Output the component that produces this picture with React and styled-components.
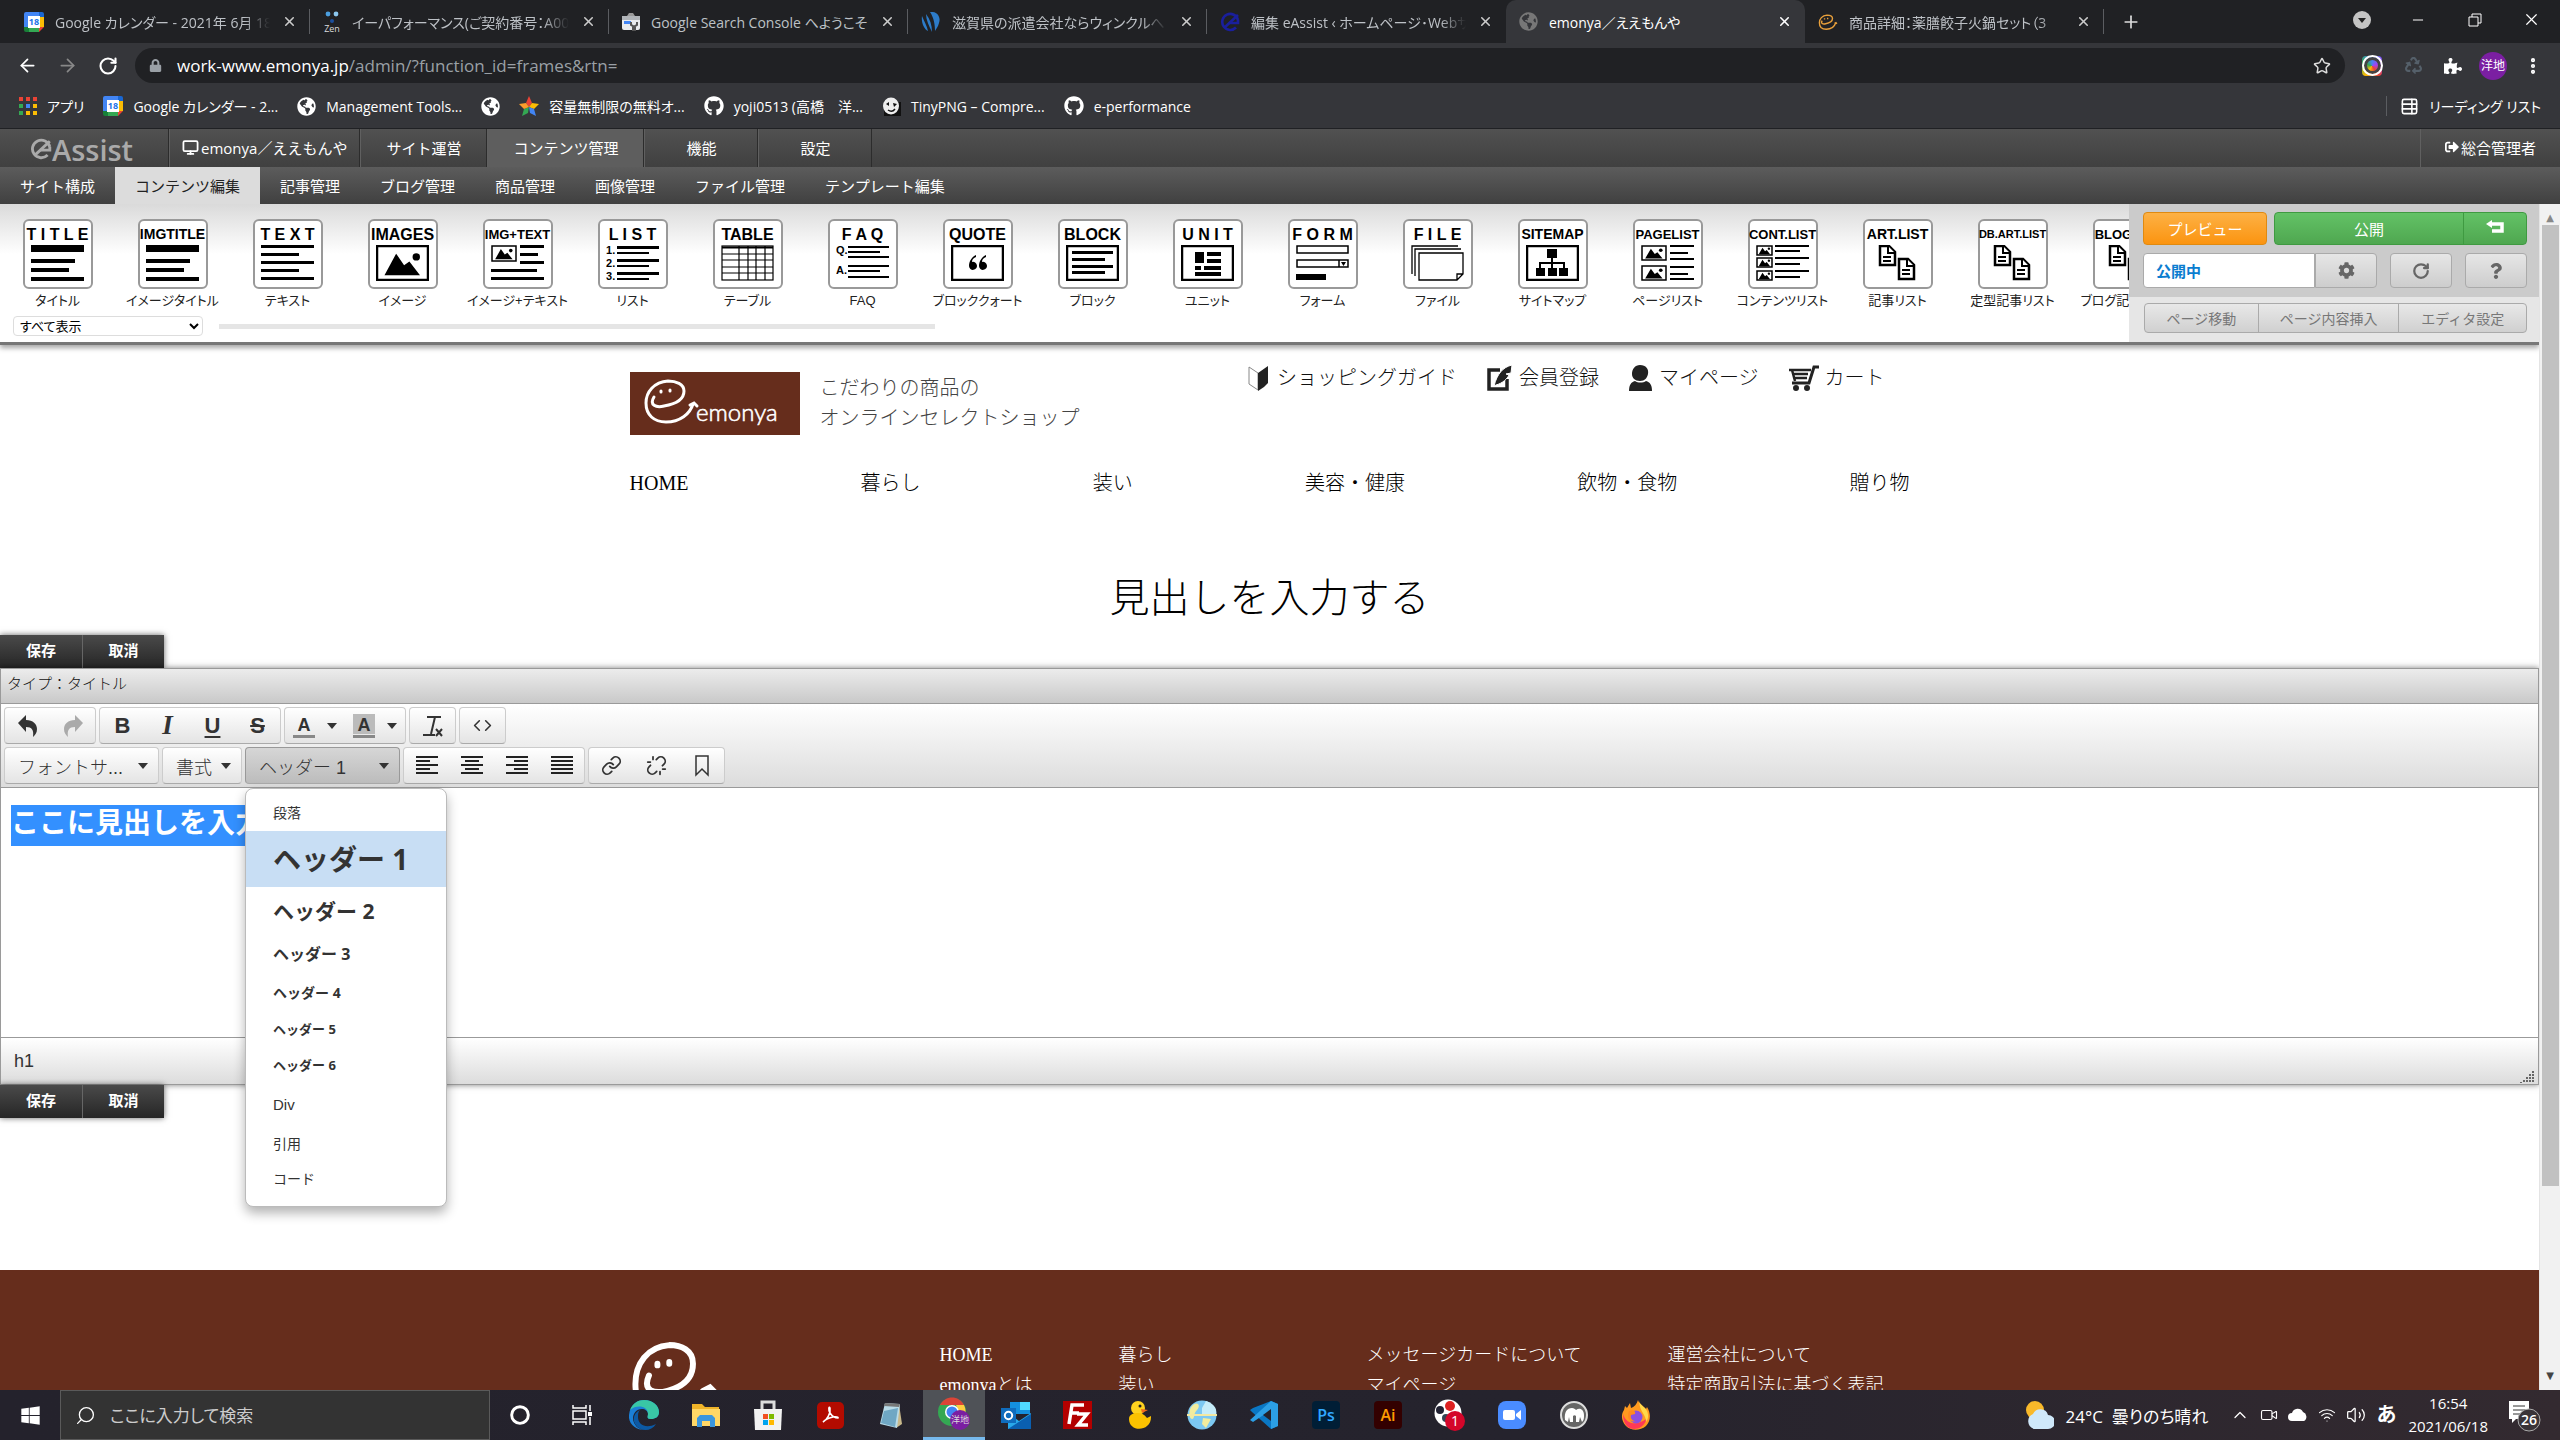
import React from "react";
import styled, { createGlobalStyle, css } from "styled-components";
import {
  FaGithub, FaLock, FaGlobeAmericas, FaCog, FaQuestion, FaRecycle, FaPuzzlePiece, FaWindows, FaSignOutAlt,
} from "react-icons/fa";
import {
  ArrowLeft, ArrowRight, RotateCw, Star, MoreVertical, X, Plus, Minus, Monitor, Search, Circle,
  ChevronUp, Wifi, Volume2, Link, Unlink, Code, Video, TableProperties,
} from "lucide-react";

const ui = `"Open Sans", "Noto Sans CJK JP", sans-serif`;
const gothic = `"Liberation Sans", "Noto Sans CJK JP", sans-serif`;
const mincho = `"Liberation Serif", "Noto Sans CJK JP", serif`;
const narrow = `"Liberation Sans Narrow", "Liberation Sans", sans-serif`;

const GlobalStyle = createGlobalStyle`
  * {
    box-sizing: border-box;
  }

  body {
    margin: 0;
    overflow: hidden;
    background: #fff;
  }

  button,
  input,
  select {
    font: inherit;
    color: inherit;
    margin: 0;
    padding: 0;
    border: 0;
    background: none;
  }

  a {
    color: inherit;
    text-decoration: none;
  }

  h1, p, ul {
    margin: 0;
    padding: 0;
  }
`;

const Screen = styled.div`
  height: 100vh;
  display: flex;
  flex-direction: column;
  overflow: hidden;
  font-family: ${ui};
  white-space: nowrap;
`;

/* ---------- browser ---------- */

const TabStrip = styled.div`
  flex: none;
  height: 43px;
  display: flex;
  padding-left: 11px;
  background: #202124;
  color: #bdc1c6;
  font-size: 14px;
  font-feature-settings: "palt";
`;

const Tab = styled.div`
  flex: 0 1 299px;
  min-width: 0;
  display: flex;
  align-items: center;
  gap: 11px;
  padding: 0 13px;
  position: relative;

  &::after {
    content: "";
    position: absolute;
    right: 0;
    top: 9px;
    height: 25px;
    width: 1px;
    background: ${(p) => (p.$plain ? "transparent" : "#5b5d61")};
  }

  ${(p) =>
    p.$active &&
    css`
      background: #35363a;
      color: #fff;
      border-radius: 10px 10px 0 0;
    `}
`;

const TabTitle = styled.span`
  flex: 1;
  min-width: 0;
  mask-image: ${(p) => (p.$fade ? "linear-gradient(90deg, #000 88%, transparent)" : "none")};
`;

const IconButton = styled.button`
  display: flex;
  align-items: center;
  justify-content: center;
  flex: none;
  width: ${(p) => p.$w || 16}px;
`;

const WindowButtons = styled.div`
  margin-left: auto;
  display: flex;
  align-items: center;
  padding-bottom: 4px;
  color: #fff;
`;

const Toolbar = styled.div`
  flex: none;
  height: 45px;
  display: flex;
  align-items: center;
  padding: 0 14px 0 7px;
  background: #35363a;
  color: #fff;
`;

const Omnibox = styled.div`
  flex: 1;
  height: 35px;
  margin: 0 13px 0 7px;
  padding: 0 14px;
  display: flex;
  align-items: center;
  gap: 15px;
  border-radius: 18px;
  background: #202124;
  color: #9aa0a6;
  font-size: 17px;

  span {
    flex: 1;
  }

  b {
    color: #fff;
    font-weight: 400;
  }
`;

const Extensions = styled.div`
  display: flex;
  align-items: center;
`;

const Camera = styled.span`
  width: 20px;
  height: 20px;
  border-radius: 4px;
  background: conic-gradient(#4285f4, #a142f4, #ea4335, #fbbc05, #34a853, #4285f4);
  display: flex;
  align-items: center;
  justify-content: center;

  &::after {
    content: "";
    width: 11px;
    height: 11px;
    border: 3px solid #444;
    outline: 2px solid #fff;
    border-radius: 50%;
  }
`;

const Profile = styled.span`
  width: 28px;
  height: 28px;
  border-radius: 50%;
  background: #7b1fa2;
  font-size: 12px;
  line-height: 28px;
  text-align: center;
`;

const Bookmarks = styled.nav`
  flex: none;
  height: 41px;
  display: flex;
  align-items: center;
  gap: 19px;
  padding: 0 19px 4px;
  background: #35363a;
  border-bottom: 1px solid #202124;
  color: #fff;
  font-size: 14px;
  font-feature-settings: "palt";

  a {
    display: flex;
    align-items: center;
    gap: 10px;
  }
`;

const ReadingList = styled.a`
  margin-left: auto;
  padding-left: 13px;
  border-left: 1px solid #5b5d61;
`;

/* ---------- admin menu ---------- */

const AdminBar = styled.nav`
  flex: none;
  display: flex;
  height: 38px;
  background: linear-gradient(#515151, #404040);
  color: #fff;
  font-size: 15px;
`;

const Brand = styled.div`
  width: 169px;
  display: flex;
  align-items: center;
  padding: 2px 0 0 30px;
  border-right: 1px solid #2c2c2c;
  color: #aaa;
  font: 600 29px ${ui};
`;

const AdminLink = styled.a`
  display: flex;
  align-items: center;
  gap: 2px;
  padding: 0 ${(p) => p.$pad}px 2px;
  border-left: 1px solid #606060;
  border-right: 1px solid #2c2c2c;
  background: ${(p) => (p.$active ? "#5e5e5e" : "none")};

  &:last-child {
    margin-left: auto;
    border-right: 0;
  }
`;

const SubBar = styled(AdminBar)`
  height: 37px;
  background: linear-gradient(#5c5c5c, #404040);
`;

const SubLink = styled.a`
  display: flex;
  align-items: center;
  padding: 0 20px 1px;
  background: ${(p) => (p.$active ? "#dcdcdc" : "none")};
  color: ${(p) => (p.$active ? "#222" : "#fff")};
`;

/* ---------- framed page ---------- */

const Frame = styled.div`
  flex: 1;
  min-height: 0;
  display: flex;
`;

const Page = styled.div`
  flex: 1;
  min-width: 0;
  overflow: hidden;
  display: flex;
  flex-direction: column;
`;

const Scrollbar = styled.div`
  flex: none;
  width: 21px;
  padding: 7px 2px;
  display: flex;
  flex-direction: column;
  align-items: center;
  background: #f1f1f1;
  border-left: 1px solid #e4e4e4;
  color: #888;
  font: 10px/14px "DejaVu Sans", sans-serif;

  i {
    width: 17px;
    flex: 0 0 82%;
    background: #c1c1c1;
  }

  span:last-child {
    margin-top: auto;
    color: #444;
  }
`;

const Palette = styled.section`
  flex: none;
  display: flex;
  height: 141px;
  border-bottom: 3px solid #777;
  box-shadow: 0 3px 5px rgba(0, 0, 0, 0.35);
  background: linear-gradient(#dadada, #fff 50px);
  font-family: ${gothic};
`;

const PaletteLeft = styled.div`
  flex: 1;
  min-width: 0;
  overflow: hidden;
`;

const Parts = styled.div`
  display: flex;
  padding-top: 15px;
  height: 108px;
`;

const Part = styled.button`
  flex: 0 0 115px;
  display: flex;
  flex-direction: column;
  align-items: center;
  gap: 3px;
  font-size: 13px;
  line-height: 18px;
  color: #222;
  font-feature-settings: "palt";
`;

const Card = styled.span`
  width: 70px;
  height: 70px;
  display: flex;
  flex-direction: column;
  align-items: center;
  justify-content: space-between;
  padding: 4px 6px 6px;
  border: 2px solid #999;
  border-radius: 6px;
  background: #fff;
  color: #000;
  font-family: ${narrow};
  font-weight: 700;
  font-size: ${(p) => p.$size}px;
  line-height: 19px;
`;

const Filter = styled.div`
  display: flex;
  align-items: center;
  gap: 16px;
  padding: 4px 0 0 13px;
`;

const FilterSelect = styled.select`
  width: 190px;
  height: 20px;
  padding-left: 2px;
  border: 1px solid #ddd;
  border-radius: 4px;
  background: #fff;
  color: #000;
  font-size: 13px;
  font-feature-settings: "palt";
`;

const Track = styled.div`
  flex: 0 1 716px;
  height: 5px;
  background: #e5e5e5;
`;

const Controls = styled.div`
  flex: none;
  width: 410px;
  display: flex;
  flex-direction: column;
  background: #e6e6e6;
  font-size: 15px;
`;

const ControlTop = styled.div`
  height: 93px;
  padding: 8px 12px 0 14px;
  display: flex;
  flex-direction: column;
  gap: 8px;
  background: #cbcbcb;
`;

const ControlRow = styled.div`
  display: flex;
  gap: ${(p) => p.$gap}px;
`;

const Preview = styled.button`
  width: 124px;
  height: 33px;
  border: 1px solid #e08a10;
  border-radius: 4px;
  background: linear-gradient(#fdb145, #fb9410);
  color: #fff;
`;

const Publish = styled.div`
  flex: 1;
  display: flex;
  border: 1px solid #3f9a41;
  border-radius: 4px;
  background: linear-gradient(#63c266, #4fa750);
  color: #fff;

  button:first-child {
    flex: 1;
    border-right: 1px solid #3f9a41;
  }

  button:last-child {
    width: 62px;
  }
`;

const Status = styled.div`
  display: flex;
  flex: 1;
`;

const StatusInput = styled.input`
  width: 172px;
  height: 35px;
  padding: 0 12px;
  border: 1px solid #aaa;
  border-radius: 4px 0 0 4px;
  background: #fff;
  color: #0b7dd0;
  font-weight: 700;
`;

const Gray = styled.button`
  display: flex;
  align-items: center;
  justify-content: center;
  width: 62px;
  height: 35px;
  border: 1px solid #aaa;
  border-radius: ${(p) => (p.$joined ? "0 4px 4px 0" : "4px")};
  background: linear-gradient(#e6e6e6, #cdcdcd);
  color: #666;
`;

const PageTools = styled.div`
  display: flex;
  margin: 6px 12px 0 15px;
  height: 30px;
  border: 1px solid #aaa;
  border-radius: 4px;
  background: linear-gradient(#e8e8e8, #d0d0d0);
  color: #777;
  font-size: 14px;

  button {
    flex: 114 1 0;
  }

  button + button {
    flex: 141 1 0;
    border-left: 1px solid #aaa;
  }

  button:last-child {
    flex: 128 1 0;
  }
`;

/* ---------- shop ---------- */

const ShopHeader = styled.header`
  flex: none;
  width: 1280px;
  max-width: 100%;
  margin: 0 auto;
  padding-top: 18px;
  font: 300 20px/30px ${mincho};
  color: #111;
`;

const ShopTop = styled.div`
  display: flex;
`;

const LogoLink = styled.a`
  display: flex;
  padding-top: 9px;
`;

const Tagline = styled.p`
  margin: 10px 0 0 20px;
  color: #444;
`;

const Account = styled.ul`
  display: flex;
  gap: 29px;
  margin-left: auto;
  padding-right: 25px;
  list-style: none;

  a {
    display: flex;
    align-items: center;
    gap: 6px;
  }
`;

const ShopNav = styled.nav`
  display: flex;
  justify-content: space-between;
  margin-top: 33px;
  color: #000;
`;

const Heading = styled.h1`
  flex: none;
  padding: 71px 0 6px;
  text-align: center;
  font: 300 40px/60px ${mincho};
`;

/* ---------- editor ---------- */

const SaveTabs = styled.div`
  flex: none;
  align-self: flex-start;
  display: flex;
  height: 33px;
  background: linear-gradient(#4a4a4a, #262626);
  box-shadow: 0 0 6px rgba(0, 0, 0, 0.6);
  color: #fff;
  font: 700 15px ${mincho};

  button {
    width: 82px;
    padding-bottom: 4px;
  }

  button + button {
    border-left: 1px solid #666;
  }
`;

const Editor = styled.section`
  flex: none;
  border: 1px solid #9a9a9a;
  box-shadow: 0 0 6px rgba(0, 0, 0, 0.5);
  background: #fff;
  color: #333;
  font-family: ${gothic};
`;

const TypeBar = styled.div`
  height: 35px;
  padding: 0 6px;
  line-height: 31px;
  border-bottom: 1px solid #9a9a9a;
  background: linear-gradient(#ececec, #c9c9c9);
  font-family: ${mincho};
  font-size: 15px;
  font-weight: 300;
  color: #111;
`;

const Tools = styled.div`
  padding: 3px;
  display: flex;
  flex-direction: column;
  gap: 3px;
  border-bottom: 1px solid #9a9a9a;
  background: linear-gradient(#fff, #dcdcdc);
`;

const ToolRow = styled.div`
  display: flex;
  gap: 3px;
`;

const Group = styled.div`
  display: flex;
  height: 37px;
  border: 1px solid #ccc;
  border-radius: 4px;
  border-bottom-color: #aaa;
  background: linear-gradient(#fff, #e4e4e4);
`;

const Tool = styled.button`
  width: ${(p) => p.$w || 45}px;
  display: flex;
  align-items: center;
  justify-content: center;
  gap: 12px;
  color: ${(p) => (p.$off ? "#aaa" : "#333")};
`;

const Glyph = styled.span`
  font: ${(p) => (p.$italic ? "italic 700 27px 'Liberation Serif', serif" : "700 22px 'Liberation Sans', sans-serif")};
  text-decoration: ${(p) => p.$line || "none"};
  text-decoration-thickness: 2px;
  text-underline-offset: 3px;
`;

const Caret = styled.span`
  border: 5px solid transparent;
  border-top: 6px solid #333;
  border-bottom: 0;
`;

const DropWrap = styled.div`
  position: relative;
`;

const Drop = styled.button`
  width: ${(p) => p.$w}px;
  height: 37px;
  padding: 0 10px 0 13px;
  display: flex;
  align-items: center;
  justify-content: space-between;
  border: 1px solid ${(p) => (p.$open ? "#999" : "#ccc")};
  border-bottom-color: #aaa;
  border-radius: 4px;
  background: ${(p) => (p.$open ? "linear-gradient(#d6d6d6, #bcbcbc)" : "linear-gradient(#fff, #e4e4e4)")};
  font-size: 18px;
  font-weight: 300;
`;

const Menu = styled.ul`
  position: absolute;
  z-index: 5;
  left: 0;
  top: 41px;
  width: 202px;
  padding: 4px 0 12px;
  list-style: none;
  border: 1px solid #bbb;
  border-radius: 8px;
  background: #fff;
  box-shadow: 0 6px 12px rgba(0, 0, 0, 0.3);
`;

const MenuItem = styled.li`
  height: ${(p) => p.$h}px;
  padding: 0 27px ${(p) => (p.$bold ? 3 : 0)}px;
  display: flex;
  align-items: center;
  font-family: ${(p) => (p.$bold ? ui : gothic)};
  font-size: ${(p) => p.$size}px;
  font-weight: ${(p) => (p.$bold ? 700 : 400)};
  background: ${(p) => (p.$on ? "#c8def4" : "none")};
`;

const Body = styled.div`
  height: 250px;
  padding: 17px 10px;
  border-bottom: 1px solid #9a9a9a;

  mark {
    display: inline-block;
    height: 41px;
    line-height: 37px;
    background: #3390ff;
    color: #fff;
    font-size: 28px;
    font-weight: 700;
  }
`;

const PathBar = styled.div`
  height: 46px;
  display: flex;
  align-items: center;
  justify-content: space-between;
  padding: 0 4px 0 13px;
  background: linear-gradient(#fff, #dcdcdc);
  font-size: 18px;

  svg {
    align-self: flex-end;
  }
`;

const Footer = styled.footer`
  flex: none;
  margin-top: 152px;
  padding-top: 70px;
  height: 400px;
  background: #662d1c;
  color: #fff;
  font: 300 18px/30px ${mincho};
`;

const FooterInner = styled.div`
  width: 1280px;
  max-width: 100%;
  margin: 0 auto;
  display: grid;
  grid-template-columns: 310px 179px 248px 301px 1fr;

  a {
    display: block;
  }
`;

/* ---------- taskbar ---------- */

const Taskbar = styled.div`
  flex: none;
  height: 50px;
  display: flex;
  align-items: stretch;
  background: linear-gradient(90deg, #24222c, #25232d 60%, #332a30);
  color: #fff;
`;

const TaskButton = styled.button`
  width: ${(p) => p.$w || 62}px;
  display: flex;
  align-items: center;
  justify-content: center;
  background: ${(p) => (p.$on ? "#4f5257" : "none")};
  border-bottom: ${(p) => (p.$on ? "3px solid #76b9ed" : "0")};
`;

const SearchBox = styled.label`
  width: 430px;
  margin-right: -1px;
  padding: 0 14px;
  display: flex;
  align-items: center;
  gap: 14px;
  border: 1px solid #5a5a5a;
  background: #333;
  font-size: 17px;

  input {
    flex: 1;
    min-width: 0;
    font-feature-settings: "palt";
  }

  input::placeholder {
    color: #ccc;
    opacity: 1;
  }
`;

const Tray = styled.div`
  margin-left: auto;
  display: flex;
  align-items: center;
  gap: 10px;
  padding-right: 18px;
  font-size: 16px;
`;

const Weather = styled.span`
  margin-right: 12px;
  display: flex;
  align-items: center;
  gap: 12px;
  font-size: 17px;
  font-feature-settings: "palt";
`;

const Ime = styled.b`
  font-size: 20px;
  line-height: 24px;
`;

const Clock = styled.span`
  padding: 0 10px 0 2px;
  text-align: center;
  font-size: 15px;
  line-height: 23px;
`;

/* ---------- drawings ---------- */

const CalendarIcon = () => (
  <svg width="20" height="20" viewBox="0 0 20 20">
    <path fill="#4285f4" d="M2 0h13v5H5v10H0V2a2 2 0 0 1 2-2z" />
    <path fill="#1967d2" d="M15 0h3a2 2 0 0 1 2 2v3h-5z" />
    <path fill="#fbbc04" d="M15 5h5v10h-5z" />
    <path fill="#34a853" d="M5 15h10v5H5z" />
    <path fill="#188038" d="M0 15h5v5H2a2 2 0 0 1-2-2z" />
    <path fill="#ea4335" d="M15 15h5l-5 5z" />
    <path fill="#fff" d="M4 4h12v12H4z" />
    <text x="10" y="13" fontSize="9" fontWeight="700" fill="#1a73e8" textAnchor="middle">18</text>
  </svg>
);

const ZenIcon = () => (
  <svg width="18" height="22" viewBox="0 0 18 22">
    <circle cx="5" cy="3" r="2.4" fill="#4b9fe0" />
    <circle cx="13" cy="3" r="2.4" fill="#8cc8f0" />
    <circle cx="9" cy="10" r="2" fill="#1c4f9c" />
    <text x="9" y="21" fontSize="9" fill="#ddd" textAnchor="middle">Zen</text>
  </svg>
);

const ConsoleIcon = () => (
  <svg width="18" height="18" viewBox="0 0 18 18">
    <path d="M5 3l2-3h4l2 3z" fill="#999" />
    <rect y="3" width="18" height="14" rx="2" fill="#e8eaed" />
    <rect y="3" width="18" height="4" fill="#b0b4b8" />
    <path fill="#4285f4" d="M2 8h7v3H2z" />
    <path d="M9 9v3l2 1v4h2v-4l2-1V9" fill="none" stroke="#555" strokeWidth="2" />
  </svg>
);

const StripesIcon = () => (
  <svg width="20" height="20" viewBox="0 0 20 20" fill="#2d7cc9">
    <path d="M1 4c2 5 5 10 6 15C3 17 0 10 1 4zM5 2c4 5 6 11 6 18C8 14 5 8 5 2zM9 0c8-1 11 6 9 11-1 4-3 6-4 8C14 13 13 6 9 0z" />
  </svg>
);

const SlashE = ({ color, size }) => (
  <svg width={size} height={size} viewBox="0 0 20 20" fill="none" stroke={color} strokeWidth="2.6">
    <path d="M18 8A8 8 0 1 0 16 15.500M4 16L18 3" />
    <path d="M9 11h9V8" />
  </svg>
);

const Globe = ({ color = "#fff", size = 19 }) => <FaGlobeAmericas size={size} color={color} />;

const AppsIcon = () => (
  <svg width="18" height="18" viewBox="0 0 18 18">
    {["#ea4335", "#ea4335", "#ea4335", "#34a853", "#4285f4", "#fbbc04", "#34a853", "#fbbc04", "#fbbc04"].map((c, i) => (
      <rect key={i} x={(i % 3) * 7} y={Math.floor(i / 3) * 7} width="4" height="4" fill={c} />
    ))}
  </svg>
);

const RainbowStar = () => (
  <svg width="20" height="20" viewBox="0 0 20 20">
    <path d="M10 0l3 7-3 4-3-4z" fill="#ea4335" />
    <path d="M20 8l-5 5-5-2 3-4z" fill="#fbbc04" />
    <path d="M17 20l-6-3-1-6 5 2z" fill="#4285f4" />
    <path d="M3 20l6-3 1-6-5 2z" fill="#34a853" />
    <path d="M0 8l5 5 5-2-3-4z" fill="#fb9c2c" />
  </svg>
);

const Panda = () => (
  <svg width="19" height="19" viewBox="0 0 19 19">
    <rect x="2" y="5" width="17" height="14" fill="#111" />
    <ellipse cx="9" cy="9" rx="8" ry="8.500" fill="#eee" />
    <path d="M4 7l3-2v4zM11 6l4 1-3 3z" fill="#111" />
    <path d="M6 13q4 3 7-1" fill="none" stroke="#111" strokeWidth="1.500" />
  </svg>
);

const face =
  "M24 25C19 33 26 36 34 34C46 32 54 27 54 19C54 12 46 9 38 9C24 10 16 20 16 31C16 43 24 50 36 50C50 50 60 42 63 32M60 33l4-2 3 3";

const FaceIcon = () => (
  <svg width="20" height="20" viewBox="12 4 58 50" fill="none" stroke="#e9a03b" strokeWidth="4">
    <path d={face} />
    <path d="M31 18v4M40 17v4" />
  </svg>
);

const Logo = () => (
  <svg width="170" height="63" viewBox="0 0 170 63" role="img" aria-label="emonya">
    <rect width="170" height="63" fill="#662d1c" />
    <g fill="none" stroke="#fff" strokeWidth="3" strokeLinecap="round">
      <path d={face} />
      <path d="M31 19v1M40 18v1" />
    </g>
    <text x="66" y="49" fontSize="24" fontFamily="Lato, sans-serif" fill="#fff" stroke="#fff" strokeWidth="0.600">emonya</text>
  </svg>
);

const FooterLogo = () => (
  <svg width="170" height="105" viewBox="13 6 100 62" fill="none" stroke="#fff" strokeWidth="3.500" strokeLinecap="round">
    <path d="M24 27C20 36 27 38 35 36C46 33 50 27 50 20C50 12 43 9 36 9C23 10 16 20 16 32C16 45 24 52 34 52C46 52 56 45 59 35M56 36l4-2 3 3" />
    <path d="M29 20v1M36 19v1" />
  </svg>
);

const Bars = ({ list }) => list.map(([x, y, w, h = 3], i) => <rect key={i} x={x} y={y} width={w} height={h} />);

const Photo = ({ x = 0, y = 0, w, h }) => (
  <g>
    <rect x={x + 1} y={y + 1} width={w - 2} height={h - 2} fill="none" stroke="#000" strokeWidth={w > 30 ? 2.5 : 1.5} />
    <path d={`M${x + w * 0.16} ${y + h * 0.84}l${w * 0.22} ${-h * 0.6} ${w * 0.15} ${h * 0.32} ${w * 0.1} ${-h * 0.1} ${w * 0.2} ${h * 0.38}z`} />
    <circle cx={x + w * 0.76} cy={y + h * 0.33} r={w * 0.07} />
  </g>
);

const Boxed = ({ children }) => (
  <>
    <rect x="1" y="1" width="51" height="34" fill="none" stroke="#000" strokeWidth="2.500" />
    {children}
  </>
);

const art = {
  title: <Bars list={[[0, 0, 53, 7], [0, 14, 44, 4], [0, 23, 38, 4], [0, 32, 53, 4]]} />,
  text: <Bars list={[[0, 0, 53], [0, 8, 38], [0, 16, 53], [0, 24, 38], [0, 32, 53]]} />,
  image: <Photo w={53} h={36} />,
  imgtext: (
    <>
      <Photo w={26} h={17} />
      <Bars list={[[29, 0, 24], [29, 8, 18], [29, 16, 24], [0, 24, 46], [0, 32, 53]]} />
    </>
  ),
  list: (
    <>
      <Bars list={[[11, 1, 42], [11, 7, 32, 2], [11, 14, 42], [11, 20, 32, 2], [11, 27, 42], [11, 33, 32, 2]]} />
      {[1, 2, 3].map((n) => (
        <text key={n} x="0" y={n * 13 - 4} fontSize="11">{n}.</text>
      ))}
    </>
  ),
  table: (
    <g fill="none" stroke="#000" strokeWidth="1.200">
      <rect x="1" y="1" width="51" height="34" />
      <path d="M1 2h51M1 3h51M1 9h51M1 15h51M1 22h51M1 28h51M18 1v34M27 1v34M35 1v34M44 1v34" />
    </g>
  ),
  faq: (
    <>
      <text x="0" y="9" fontSize="11">Q.</text>
      <text x="0" y="29" fontSize="11">A.</text>
      <Bars list={[[12, 1, 41, 2], [12, 6, 32, 2], [12, 11, 41, 2], [12, 20, 41, 2], [12, 25, 32, 2], [12, 31, 41, 2]]} />
    </>
  ),
  quote: (
    <Boxed>
      <path d="M25 10c-4 2-7 6-7 11a4 4 0 1 0 3-4c0-3 2-4 4-5zM35 10c-4 2-7 6-7 11a4 4 0 1 0 3-4c0-3 2-4 4-5z" />
    </Boxed>
  ),
  block: (
    <Boxed>
      <Bars list={[[6, 6, 41], [6, 13, 33], [6, 20, 41], [6, 26, 33]]} />
    </Boxed>
  ),
  unit: (
    <Boxed>
      <Bars list={[[14, 7, 9, 11], [26, 7, 14, 4], [26, 14, 14, 4], [14, 21, 6, 4], [23, 21, 17, 4], [14, 27, 26, 4]]} />
    </Boxed>
  ),
  form: (
    <>
      <path d="M1 1h51v7H1zM1 15h51v7H1zM43 15v7" fill="none" stroke="#000" strokeWidth="1.500" />
      <path d="M45 17h5l-2.500 4z" />
      <Bars list={[[0, 29, 30, 6]]} />
    </>
  ),
  file: (
    <path d="M1 29V1h46M4 31V4h46M8 8h44v21l-6 6H8zM52 29h-6v6" fill="none" stroke="#000" strokeWidth="1.300" />
  ),
  sitemap: (
    <Boxed>
      <Bars list={[[21, 4, 10, 9], [10, 23, 9, 8], [22, 23, 9, 8], [33, 23, 9, 8]]} />
      <path d="M26 12v12M14 24v-6h24v6" fill="none" stroke="#000" strokeWidth="2" />
    </Boxed>
  ),
  pagelist: (
    <>
      <Photo w={26} h={16} />
      <Photo y={20} w={26} h={16} />
      <Bars list={[[29, 0, 24, 2], [29, 7, 18, 2], [29, 13, 24, 2], [29, 21, 24, 2], [29, 28, 18, 2], [29, 33, 24, 2]]} />
    </>
  ),
  contlist: (
    <>
      <Photo w={17} h={11} />
      <Photo y={12} w={17} h={11} />
      <Photo y={25} w={17} h={11} />
      <Bars list={[[19, 0, 34, 2], [19, 5, 25, 2], [19, 12, 34, 2], [19, 18, 25, 2], [19, 25, 34, 2], [19, 31, 25, 2]]} />
    </>
  ),
  pages: (
    <g fill="#fff" stroke="#000" strokeWidth="2.500">
      <path d="M9 1h9l6 6v13H9zM28 14h9l6 6v14H28z" />
      <path d="M17 1v7h7M36 14v7h7M12 12h8M12 16h8M31 25h8M31 29h8" strokeWidth="2" />
    </g>
  ),
};

const parts = [
  ["T I T L E", "タイトル", "title", 16],
  ["IMGTITLE", "イメージタイトル", "title", 14],
  ["T E X T", "テキスト", "text", 16],
  ["IMAGES", "イメージ", "image", 16],
  ["IMG+TEXT", "イメージ+テキスト", "imgtext", 13],
  ["L I S T", "リスト", "list", 16],
  ["TABLE", "テーブル", "table", 16],
  ["F A Q", "FAQ", "faq", 16],
  ["QUOTE", "ブロッククォート", "quote", 16],
  ["BLOCK", "ブロック", "block", 16],
  ["U N I T", "ユニット", "unit", 16],
  ["F O R M", "フォーム", "form", 16],
  ["F I L E", "ファイル", "file", 16],
  ["SITEMAP", "サイトマップ", "sitemap", 14],
  ["PAGELIST", "ページリスト", "pagelist", 13],
  ["CONT.LIST", "コンテンツリスト", "contlist", 13],
  ["ART.LIST", "記事リスト", "pages", 14],
  ["DB.ART.LIST", "定型記事リスト", "pages", 11],
  ["BLOGLIST", "ブログ記事リスト", "pages", 13],
];

const UndoIcon = ({ flip }) => (
  <svg width="20" height="22" viewBox="0 0 20 22" fill="currentColor">
    <path transform={flip ? "matrix(-1 0 0 1 20 0)" : undefined} d="M8 0v5c7 0 11 4 11 9 0 4-2 6-4 8 1-7-1-10-7-10v5L0 8z" />
  </svg>
);

const AlignIcon = ({ widths, right, center }) => (
  <svg width="22" height="19" viewBox="0 0 22 19" fill="#222">
    {widths.map((w, i) => (
      <rect key={i} x={right ? 22 - w : center ? (22 - w) / 2 : 0} y={i * 4} width={w} height="2" />
    ))}
  </svg>
);

const LetterIcon = ({ fill }) => (
  <svg width="22" height="24" viewBox="0 0 22 24">
    {fill && <rect width="22" height="20" fill="#bbb" />}
    <text x="11" y="17" fontSize="18" fontWeight="700" fill="#333" textAnchor="middle">A</text>
    <rect y="21" width="22" height="3" fill="#888" />
  </svg>
);

const ClearIcon = () => (
  <svg width="22" height="22" viewBox="0 0 22 22" fill="none" stroke="#333" strokeWidth="2">
    <path d="M5 2h14M13 2L9 19M1 20h12M14 14l6 7M20 14l-6 7" />
  </svg>
);

const MarkIcon = () => (
  <svg width="14" height="22" viewBox="0 0 14 22" fill="none" stroke="#333" strokeWidth="1.500">
    <path d="M1 1h12v19l-6-6-6 6z" />
  </svg>
);

const Tile = ({ bg, color, label }) => (
  <svg width="30" height="30" viewBox="0 0 30 30">
    <rect x="1" y="1" width="28" height="28" rx="4" fill={bg} />
    <text x="15" y="21" fontSize="16" fontWeight="600" fill={color} textAnchor="middle">{label}</text>
  </svg>
);

const Draw = ({ children }) => (
  <svg width="30" height="30" viewBox="0 0 30 30">{children}</svg>
);

const taskIcons = [
  ["Cortana", <Circle size={20} strokeWidth={3.5} />],
  ["タスク ビュー", (
    <Draw>
      <path d="M6 5v3h13V5M6 25v-3h13v3M6 11h13v8H6zM23 5v6M23 17v8" fill="none" stroke="#fff" strokeWidth="1.500" />
      <rect x="21" y="12" width="4" height="4" fill="#fff" />
    </Draw>
  )],
  ["Edge", (
    <Draw>
      <path d="M0 15C1 5 8 0 15 0c9 0 15 6 15 12 0 5-4 7-8 7-5 0-3-3-3-5 0-3-3-5-6-5-6 0-9 5-9 9 0 7 6 12 12 12C7 30-1 24 0 15z" fill="#1b7fd6" />
      <path d="M1 10C4 3 9 0 15 0c9 0 15 6 15 12 0 5-4 7-8 7-5 0-3-3-3-5C19 6 8 4 1 10z" fill="#39c6a5" />
      <path d="M9 17c0 8 8 12 18 7-5 8-16 8-21 0-3-6 0-12 5-14-2 2-2 4-2 7z" fill="#0c59a4" />
    </Draw>
  )],
  ["エクスプローラー", (
    <Draw>
      <path d="M1 4h10l3 3h14v19H1z" fill="#f0b429" />
      <path d="M1 9h28v17H1z" fill="#ffd766" />
      <path d="M6 27v-9l3-3h12l3 3v9h-5v-6h-8v6z" fill="#3b96dd" />
    </Draw>
  )],
  ["Store", (
    <Draw>
      <path d="M9 10V2h12v8" fill="none" stroke="#ddd" strokeWidth="3" />
      <path d="M1 9h28l-1 21H2z" fill="#f2f2f2" />
      <path d="M10 14h5v5h-5z" fill="#f25022" />
      <path d="M16 14h5v5h-5z" fill="#7fba00" />
      <path d="M10 20h5v5h-5z" fill="#00a4ef" />
      <path d="M16 20h5v5h-5z" fill="#ffb900" />
    </Draw>
  )],
  ["Acrobat", (
    <Draw>
      <rect x="2" y="2" width="27" height="27" rx="5" fill="#b30b00" />
      <path d="M8 22c4-2 8-9 7-14-1-2-2 1 0 5 2 3 5 5 8 5 1-2-9-2-15 4z" fill="none" stroke="#fff" strokeWidth="1.600" />
    </Draw>
  )],
  ["メモ帳", (
    <Draw>
      <path d="M22 4l3 20-6 4z" fill="#c8b98c" />
      <path d="M8 3l15 1-3 24-17-4z" fill="#b9dbe8" />
      <path d="M8 3l15 1-1 3-15-1z" fill="#777" />
      <path d="M7 11l14-3-3 19-14-4z" fill="#6fa7c4" />
    </Draw>
  )],
  ["Chrome", (
    <svg width="32" height="34" viewBox="0 0 32 34">
      <circle cx="14" cy="15" r="14" fill="#34a853" />
      <path d="M2 8C7-2 21-2 26 8H14z" fill="#db4437" />
      <path d="M26 8c5 10-3 21-12 21l7-14-3-7z" fill="#ffcd40" />
      <circle cx="14" cy="15" r="7" fill="#fff" />
      <circle cx="14" cy="15" r="5.500" fill="#4285f4" />
      <circle cx="22" cy="23" r="10" fill="#7b1fa2" />
      <text x="22" y="26" fontSize="9" fill="#ddd" textAnchor="middle">洋地</text>
    </svg>
  ), true],
  ["Outlook", (
    <Draw>
      <path d="M9 2h20v12H9z" fill="#1490df" />
      <path d="M19 2h10v8H19z" fill="#50d9ff" />
      <path d="M7 13l11 8 12-8v16H7z" fill="#28a8ea" />
      <path d="M7 29L30 14v15z" fill="#0a5fb0" />
      <rect x="0" y="8" width="15" height="15" fill="#0f6cbd" />
      <circle cx="7.500" cy="15.500" r="3.700" fill="none" stroke="#fff" strokeWidth="2" />
    </Draw>
  )],
  ["FileZilla", (
    <Draw>
      <rect x="0" y="1" width="29" height="28" fill="#b30000" />
      <path d="M6 24L9 5h12M8 13h8M14 14h10l-9 11h10" fill="none" stroke="#fff" strokeWidth="3.500" />
    </Draw>
  )],
  ["Cyberduck", (
    <Draw>
      <circle cx="13" cy="8" r="7" fill="#ffd21f" />
      <path d="M4 19c0 14 23 13 22-3l-4 2c-3-4-6-5-9-5-4 0-9 1-9 6z" fill="#fbc200" />
      <path d="M16 9l7 1-6 3z" fill="#f26a1b" />
      <circle cx="15" cy="6" r="1.500" fill="#222" />
    </Draw>
  )],
  ["Globe", (
    <Draw>
      <circle cx="15" cy="15" r="14.500" fill="#7cc8f2" />
      <path d="M19 1c10 3 11 10 10 13H15V8z" fill="#c5ecf9" />
      <path d="M5 6c6-6 9 0 5 4s-2 9-5 9-4-9 0-13zM16 18l8 1-5 9-4-4z" fill="#f2ec9d" />
      <path d="M0 15h30" stroke="#f4e8a0" strokeWidth="2" />
    </Draw>
  )],
  ["VS Code", (
    <Draw>
      <path d="M22 1l7 3v22l-7 3L3 12l-2-2 3-2z" fill="#0a77c4" />
      <path d="M22 1l7 3v22l-7 3zM4 22l-3-2L22 1v9z" fill="#2c9fe5" />
      <path d="M22 9v12l-8-6z" fill="#24222c" />
    </Draw>
  )],
  ["Photoshop", <Tile bg="#001e36" color="#31a8ff" label="Ps" />],
  ["Illustrator", <Tile bg="#330000" color="#ff9a00" label="Ai" />],
  ["Notifier", (
    <svg width="32" height="34" viewBox="0 0 32 34">
      <circle cx="14" cy="15" r="13.500" fill="#fff" />
      <circle cx="6" cy="12" r="4" fill="#223" />
      <circle cx="16" cy="8" r="5" fill="#d22" />
      <circle cx="12" cy="20" r="4" fill="#345" />
      <circle cx="21" cy="23" r="10" fill="#d4062a" />
      <text x="21" y="28" fontSize="14" fill="#fff" textAnchor="middle">1</text>
    </svg>
  )],
  ["Zoom", (
    <Draw>
      <rect x="1" y="1" width="28" height="28" rx="8" fill="#4a8cff" />
      <rect x="6" y="10" width="12" height="10" rx="2" fill="#fff" />
      <path d="M19 14l5-4v10l-5-4z" fill="#fff" />
    </Draw>
  )],
  ["MAMP", (
    <Draw>
      <circle cx="15" cy="15" r="13" fill="#666" stroke="#ddd" strokeWidth="2" />
      <path d="M6 20c-1-8 2-12 7-12 2 0 3 1 4 2 4-3 8 0 8 5 0 3 0 5-2 7l-2-5-1 5h-3v-6c-1-1-2-1-3 0v6h-3l-1-5-1 5z" fill="#fff" />
    </Draw>
  )],
  ["Firefox", (
    <Draw>
      <path d="M17 0c1 4 6 6 8 9l1-2c4 6 4 14-1 19-6 5-15 5-20 0C0 21 0 14 3 10l1-4 2 2 3-5 1 5c3-1 6-4 7-8z" fill="#ff9a1f" />
      <path d="M2 14c3 10 14 13 24 4-2 8-8 11-13 11C7 29 2 24 2 14z" fill="#ff3a55" />
      <path d="M18 1c1 4 6 6 8 10 2 5 1 8-1 11 0-8-6-9-7-21z" fill="#ffd94a" />
      <circle cx="15" cy="17" r="6.500" fill="#8a4fe0" />
      <path d="M8 11c5-2 7 1 6 3l-4 1c-1 4 2 6 5 6-6 2-10-3-7-10z" fill="#ff8a1f" />
    </Draw>
  )],
];

const tabs = [
  ["Google カレンダー - 2021年 6月 18", <CalendarIcon />, true],
  ["イーパフォーマンス(ご契約番号：A001", <ZenIcon />, true],
  ["Google Search Console へようこそ", <ConsoleIcon />],
  ["滋賀県の派遣会社ならウィンクルへ｜", <StripesIcon />, true],
  ["編集 eAssist ‹ ホームページ･Webサイ", <SlashE color="#1a1f9c" size={20} />, true],
  ["emonya／ええもんや", <Globe color="#777" />],
  ["商品詳細：薬膳餃子火鍋セット（3", <FaceIcon />, true],
];

const bookmarks = [
  ["アプリ", <AppsIcon />],
  ["Google カレンダー - 2...", <CalendarIcon />],
  ["Management Tools...", <Globe />],
  ["", <Globe />],
  ["容量無制限の無料オ...", <RainbowStar />],
  ["yoji0513 (高橋　洋...", <FaGithub size={20} />],
  ["TinyPNG – Compre...", <Panda />],
  ["e-performance", <FaGithub size={20} />],
];

const formats = [
  ["段落", 38, 14],
  ["ヘッダー 1", 56, 28, true],
  ["ヘッダー 2", 48, 21, true],
  ["ヘッダー 3", 39, 16, true],
  ["ヘッダー 4", 39, 14, true],
  ["ヘッダー 5", 34, 13, true],
  ["ヘッダー 6", 38, 13, true],
  ["Div", 39, 15],
  ["引用", 38, 14],
  ["コード", 32, 14],
];

function Browser() {
  return (
    <>
      <TabStrip>
        {tabs.map(([title, icon, fade], i) => (
          <Tab key={title} $active={i === 5} $plain={i === 4 || i === 5}>
            {icon}
            <TabTitle $fade={fade}>{title}</TabTitle>
            <IconButton aria-label="閉じる"><X size={15} strokeWidth={2.5} color={i === 5 ? "#fff" : "#ccc"} /></IconButton>
          </Tab>
        ))}
        <IconButton $w={54} aria-label="新しいタブ"><Plus size={20} color="#ddd" /></IconButton>
        <WindowButtons>
          <IconButton $w={54} aria-label="タブを検索">
            <svg width="18" height="18"><circle cx="9" cy="9" r="9" fill="#c4c4c4" /><path d="M5 7h8l-4 5z" fill="#222" /></svg>
          </IconButton>
          <IconButton $w={57} aria-label="最小化"><Minus size={16} strokeWidth={1.5} /></IconButton>
          <IconButton $w={57} aria-label="元に戻す">
            <svg width="14" height="14" fill="none" stroke="#fff"><path d="M1 4h9v9H1zM4 4V1h9v9h-3" /></svg>
          </IconButton>
          <IconButton $w={57} aria-label="閉じる"><X size={19} strokeWidth={1.5} /></IconButton>
        </WindowButtons>
      </TabStrip>
      <Toolbar>
        <IconButton $w={40} aria-label="戻る"><ArrowLeft size={21} /></IconButton>
        <IconButton $w={40} aria-label="進む"><ArrowRight size={21} color="#888" /></IconButton>
        <IconButton $w={41} aria-label="再読み込み"><RotateCw size={20} strokeWidth={2.5} /></IconButton>
        <Omnibox>
          <FaLock size={13} />
          <span><b>work-www.emonya.jp</b>/admin/?function_id=frames&amp;rtn=</span>
          <Star size={18} color="#ddd" />
        </Omnibox>
        <Extensions>
          <IconButton $w={28} aria-label="カメラ"><Camera /></IconButton>
          <IconButton $w={54} aria-label="リサイクル"><FaRecycle size={17} color="#55606a" /></IconButton>
          <IconButton $w={26} aria-label="拡張機能"><FaPuzzlePiece size={18} /></IconButton>
          <IconButton $w={54} aria-label="プロフィール"><Profile>洋地</Profile></IconButton>
          <IconButton $w={26} aria-label="メニュー"><MoreVertical size={20} strokeWidth={3} /></IconButton>
        </Extensions>
      </Toolbar>
      <Bookmarks>
        {bookmarks.map(([name, icon], i) => (
          <a href="#" key={i}>{icon}{name}</a>
        ))}
        <ReadingList href="#"><TableProperties size={19} />リーディング リスト</ReadingList>
      </Bookmarks>
    </>
  );
}

function AdminMenu() {
  return (
    <>
      <AdminBar>
        <Brand><SlashE color="#aaa" size={22} />Assist</Brand>
        <AdminLink href="#" $pad={12}><Monitor size={17} strokeWidth={2.5} />emonya／ええもんや</AdminLink>
        <AdminLink href="#" $pad={25}>サイト運営</AdminLink>
        <AdminLink href="#" $pad={25} $active>コンテンツ管理</AdminLink>
        <AdminLink href="#" $pad={41}>機能</AdminLink>
        <AdminLink href="#" $pad={41}>設定</AdminLink>
        <AdminLink href="#" $pad={24}><FaSignOutAlt size={14} />総合管理者</AdminLink>
      </AdminBar>
      <SubBar>
        {["サイト構成", "コンテンツ編集", "記事管理", "ブログ管理", "商品管理", "画像管理", "ファイル管理", "テンプレート編集"].map((t, i) => (
          <SubLink href="#" key={t} $active={i === 1}>{t}</SubLink>
        ))}
      </SubBar>
    </>
  );
}

function PartsPalette() {
  return (
    <Palette>
      <PaletteLeft>
        <Parts>
          {parts.map(([label, name, icon, size]) => (
            <Part key={name}>
              <Card $size={size}>
                {label}
                <svg width="53" height="36" viewBox="0 0 53 36">{art[icon]}</svg>
              </Card>
              {name}
            </Part>
          ))}
        </Parts>
        <Filter>
          <FilterSelect aria-label="表示する部品"><option>すべて表示</option></FilterSelect>
          <Track />
        </Filter>
      </PaletteLeft>
      <Controls>
        <ControlTop>
          <ControlRow $gap={7}>
            <Preview>プレビュー</Preview>
            <Publish>
              <button>公開</button>
              <button aria-label="戻す">
                <svg width="20" height="14" fill="none" stroke="#fff" strokeWidth="3.500"><path d="M5 4h12v7H7" /><path d="M7 0L1 4l6 4z" fill="#fff" strokeWidth="0" /></svg>
              </button>
            </Publish>
          </ControlRow>
          <ControlRow $gap={13}>
            <Status>
              <StatusInput aria-label="公開状態" defaultValue="公開中" />
              <Gray $joined aria-label="設定"><FaCog size={17} /></Gray>
            </Status>
            <Gray aria-label="更新"><RotateCw size={18} strokeWidth={3} /></Gray>
            <Gray aria-label="ヘルプ"><FaQuestion size={16} /></Gray>
          </ControlRow>
        </ControlTop>
        <PageTools>
          <button>ページ移動</button>
          <button>ページ内容挿入</button>
          <button>エディタ設定</button>
        </PageTools>
      </Controls>
    </Palette>
  );
}

function Shop() {
  return (
    <>
      <ShopHeader>
        <ShopTop>
          <LogoLink href="#"><Logo /></LogoLink>
          <Tagline>こだわりの商品の<br />オンラインセレクトショップ</Tagline>
          <Account>
            <li>
              <a href="#">
                <svg width="24" height="26" viewBox="0 0 24 26"><path d="M2 2l9 6v17l-9-6z" fill="#fff" stroke="#888" /><path d="M21 1l-10 7v18l6-4 4-4z" fill="#222" /></svg>
                ショッピングガイド
              </a>
            </li>
            <li>
              <a href="#">
                <svg width="27" height="26" viewBox="0 0 27 26"><path d="M14 5H3v19h18V14" fill="none" stroke="#222" strokeWidth="3.500" /><path d="M26 0C17 2 11 9 8 21l2-1c7-2 11-6 13-10l-3-1 5-1z" fill="#222" stroke="#fff" /></svg>
                会員登録
              </a>
            </li>
            <li>
              <a href="#">
                <svg width="25" height="26" viewBox="0 0 25 26" fill="#222"><path d="M12 0c6 0 9 4 8 9-1 4-3 7-8 7s-8-3-8-7c0-5 3-9 8-9zM1 26c0-6 2-9 6-10 3 2 8 2 11 0 4 1 6 4 6 10z" /></svg>
                マイページ
              </a>
            </li>
            <li>
              <a href="#">
                <svg width="31" height="26" viewBox="0 0 31 26" fill="none" stroke="#222" strokeWidth="3"><path d="M31 2h-5l-5 16H4" /><path d="M1 5h22M4 5l3 11M6 9h14M7 13h12" strokeWidth="2.500" /><circle cx="8" cy="23" r="1.500" /><circle cx="19" cy="23" r="1.500" /></svg>
                カート
              </a>
            </li>
          </Account>
        </ShopTop>
        <ShopNav>
          {["HOME", "暮らし", "装い", "美容・健康", "飲物・食物", "贈り物"].map((t) => (
            <a href="#" key={t}>{t}</a>
          ))}
        </ShopNav>
      </ShopHeader>
      <Heading>見出しを入力する</Heading>
    </>
  );
}

function RichEditor() {
  return (
    <Editor>
      <TypeBar>タイプ：タイトル</TypeBar>
      <Tools>
        <ToolRow>
          <Group>
            <Tool aria-label="元に戻す"><UndoIcon /></Tool>
            <Tool $off aria-label="やり直し"><UndoIcon flip /></Tool>
          </Group>
          <Group>
            <Tool aria-label="太字"><Glyph>B</Glyph></Tool>
            <Tool aria-label="斜体"><Glyph $italic>I</Glyph></Tool>
            <Tool aria-label="下線"><Glyph $line="underline">U</Glyph></Tool>
            <Tool aria-label="取り消し線"><Glyph $line="line-through">S</Glyph></Tool>
          </Group>
          <Group>
            <Tool $w={60} aria-label="文字色"><LetterIcon /><Caret /></Tool>
            <Tool $w={60} aria-label="背景色"><LetterIcon fill /><Caret /></Tool>
          </Group>
          <Group><Tool aria-label="書式クリア"><ClearIcon /></Tool></Group>
          <Group><Tool aria-label="ソース"><Code size={19} /></Tool></Group>
        </ToolRow>
        <ToolRow>
          <Drop $w={155}>フォントサ... <Caret /></Drop>
          <Drop $w={80}>書式 <Caret /></Drop>
          <DropWrap>
            <Drop $w={155} $open>ヘッダー 1 <Caret /></Drop>
            <Menu>
              {formats.map(([name, h, size, bold]) => (
                <MenuItem key={name} $h={h} $size={size} $bold={bold} $on={size === 28}>{name}</MenuItem>
              ))}
            </Menu>
          </DropWrap>
          <Group>
            <Tool aria-label="左揃え"><AlignIcon widths={[22, 14, 22, 14, 22]} /></Tool>
            <Tool aria-label="中央揃え"><AlignIcon center widths={[22, 14, 22, 14, 22]} /></Tool>
            <Tool aria-label="右揃え"><AlignIcon right widths={[22, 14, 22, 14, 22]} /></Tool>
            <Tool aria-label="両端揃え"><AlignIcon widths={[22, 22, 22, 22, 22]} /></Tool>
          </Group>
          <Group>
            <Tool aria-label="リンク"><Link size={21} /></Tool>
            <Tool aria-label="リンク解除"><Unlink size={21} /></Tool>
            <Tool aria-label="アンカー"><MarkIcon /></Tool>
          </Group>
        </ToolRow>
      </Tools>
      <Body><mark>ここに見出しを入力</mark></Body>
      <PathBar>
        h1
        <svg width="14" height="14" viewBox="0 0 14 14">
          <path d="M13 1v12M10 4v9M7 7v6M4 10v3M1 12v1" stroke="#666" strokeWidth="2" strokeDasharray="2 1" />
        </svg>
      </PathBar>
    </Editor>
  );
}

const Save = () => (
  <SaveTabs>
    <button>保存</button>
    <button>取消</button>
  </SaveTabs>
);

function App() {
  return (
    <Screen>
      <GlobalStyle />
      <Browser />
      <AdminMenu />
      <Frame>
        <Page>
          <PartsPalette />
          <Shop />
          <Save />
          <RichEditor />
          <Save />
          <Footer>
            <FooterInner>
              <FooterLogo />
              <div><a href="#">HOME</a><a href="#">emonyaとは</a></div>
              <div><a href="#">暮らし</a><a href="#">装い</a></div>
              <div><a href="#">メッセージカードについて</a><a href="#">マイページ</a></div>
              <div><a href="#">運営会社について</a><a href="#">特定商取引法に基づく表記</a></div>
            </FooterInner>
          </Footer>
        </Page>
        <Scrollbar><span>▲</span><i /><span>▼</span></Scrollbar>
      </Frame>
      <Taskbar>
        <TaskButton $w={60} aria-label="スタート"><FaWindows size={21} /></TaskButton>
        <SearchBox>
          <Search size={21} strokeWidth={1.5} transform="scale(-1 1)" />
          <input aria-label="検索" placeholder="ここに入力して検索" />
        </SearchBox>
        {taskIcons.map(([name, icon, on]) => (
          <TaskButton key={name} aria-label={name} $on={on}>{icon}</TaskButton>
        ))}
        <Tray>
          <Weather>
            <svg width="28" height="32" viewBox="0 0 28 32"><circle cx="9" cy="11" r="9" fill="#f9b92a" /><path d="M8 30a8 8 0 0 1-1-15 8 8 0 0 1 15 1 7 7 0 0 1 0 14z" fill="#cfe8fa" /></svg>
            24°C&nbsp; 曇りのち晴れ
          </Weather>
          <ChevronUp size={20} strokeWidth={1.5} />
          <Video size={18} strokeWidth={1.5} />
          <svg width="20" height="14" viewBox="0 0 20 14"><path d="M4 13a4 4 0 0 1 0-8 6 6 0 0 1 11-1 5 5 0 0 1 1 9z" fill="#fff" /></svg>
          <Wifi size={18} strokeWidth={1.5} />
          <Volume2 size={20} strokeWidth={1.5} />
          <Ime>あ</Ime>
          <Clock>16:54<br />2021/06/18</Clock>
          <svg width="34" height="34" viewBox="0 0 34 34">
            <path d="M1 3h20v18H8l-4 4v-4H1z" fill="#fff" />
            <path d="M5 8h12M5 12h12M5 16h8" stroke="#333" />
            <circle cx="21" cy="22" r="11" fill="#3a3438" stroke="#aaa" />
            <text x="21" y="27" fontSize="14" fontWeight="600" fill="#fff" textAnchor="middle">26</text>
          </svg>
        </Tray>
      </Taskbar>
    </Screen>
  );
}

export default App;
